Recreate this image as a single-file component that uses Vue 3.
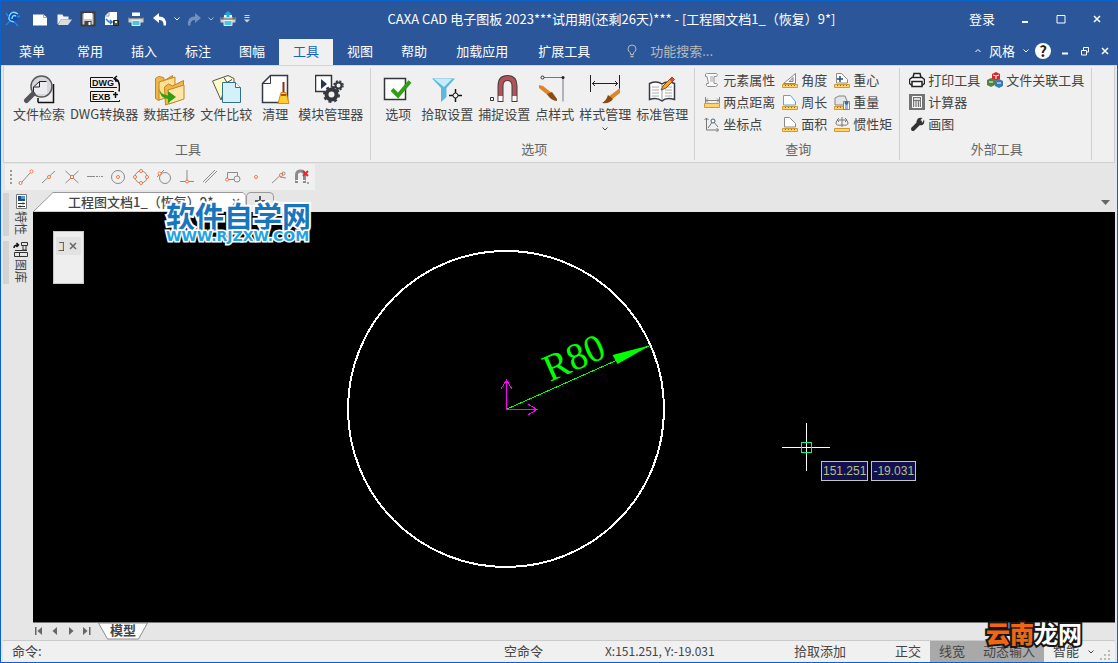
<script setup>
import { ref } from 'vue'

const search = ref('')
const command = ref('')

const quick = [
  { n: '新建', i: '<path d="M1 3.500h10.500l3.500 3v8h-14z" fill="#fff"/><path d="M11.500 3.500v3h3.500" fill="none" stroke="#9ab" />' },
  { n: '打开', i: '<path d="M1.500 13V3.500h5l1 2h5v3H5L2 13z" fill="#f4f4f4"/><path d="M5 8.500h11L12 14H2z" fill="#ddd"/>' },
  { n: '保存', i: '<path d="M1.500 1.500h13v13h-13z" fill="#ccc" stroke="#3a3a3a" stroke-width="2"/><path d="M4 2h8v6H4z" fill="#fff"/><path d="M4.500 10h7v4.500h-7z" fill="#444"/><path d="M8.500 11h2v3h-2z" fill="#fff"/>' },
  { n: '另存为', i: '<path d="M5 1h8v13H1V5z" fill="#fff"/><path d="M1 5h4V1" fill="none" stroke="#999"/><path d="M2 8l3 3h3M6 9l2 2-2 2" fill="none" stroke="#2878c8" stroke-width="1.500"/><path d="M9.500 9.500h5v5h-5z" fill="#555" stroke="#222"/><path d="M11 10h2v2h-2z" fill="#eee"/>' },
  { n: '打印', i: '<path d="M4 1.500h8V5H4z" fill="#fff"/><path d="M.5 6h15v5.500H.5z" fill="#cfcfcf"/><path d="M.5 6h15v1.500H.5z" fill="#555"/><path d="M4 9.500h8v5H4z" fill="#45c8e8" stroke="#eee"/>' },
]
const printer = '<path d="M4 4h8v3H4z" fill="#fff"/><path d="M8 0l4 3.500H9.500V6h-3V3.500H4z" fill="#18a9ea"/><path d="M.5 6h15v5.500H.5z" fill="#cfcfcf"/><path d="M.5 6h3v1.500h9V6h3v2.500H.5z" fill="#666"/><path d="M4 9.500h8v5H4z" fill="#45c8e8" stroke="#eee"/>'
const tabs = ['菜单', '常用', '插入', '标注', '图幅', '工具', '视图', '帮助', '加载应用', '扩展工具']

const toolsA = [
  { n: '文件检索', i: '<path d="M15 28.500h15.500V10" fill="none" stroke="#111" stroke-width="1.500"/><path d="M15 24v4.500" stroke="#111" stroke-width="1.500"/><circle cx="18.500" cy="12.500" r="10.500" fill="#d6d7db" stroke="#59595d" stroke-width="1.500"/><path d="M11 17v-4l5-5h8v12H13z" fill="#ececef"/><path d="M10.500 18v-5h6V7.500h7M10.500 13l6-5.500" fill="none" stroke="#222"/><path d="M10 20L3.500 26.500" stroke="#545459" stroke-width="5" stroke-linecap="round"/>' },
  { n: 'DWG转换器', i: '<path d="M25 3.500H2.500v10H29M26 17.500H2.500v10h29V26" fill="none" stroke="#111"/><text x="4" y="12" font-family="Liberation Sans, sans-serif" font-size="9" font-weight="700" fill="#111">DWG</text><text x="4" y="26" font-family="Liberation Sans, sans-serif" font-size="9" font-weight="700" fill="#111">EXB</text><path d="M27 4.500q6 3 4 13M29 2l-3 2.500 3 3M27 7h4M25 20.500h5M27.500 18v6" fill="none" stroke="#111" stroke-width="1.500"/>' },
  { n: '数据迁移', i: '<path d="M2.500 4.500l3-2 5 1 1 3 8-5 1 16-15 9-3-2z" fill="#efb649" stroke="#c48222"/><path d="M6 8l16-5v18l-16 5z" fill="#ffdf91" stroke="#c48222"/><path d="M11.500 13l4-3 4 2 11-5.500v18L12.500 31z" fill="#efb649" stroke="#c48222"/><path d="M15 16l16-5v14l-15 5z" fill="#ffe6a8" stroke="#c48222"/><path d="M6 13q0 7 9 8.500V17l8 6-8 6v-4Q6 24 6 13z" fill="#2fa012"/>' },
  { n: '文件比较', i: '<path d="M2.500 7L18 1.500l6 3v7L14 16l-3 10z" fill="#fffbc2" stroke="#555"/><path d="M14 3.500l3 5 5-3" fill="#fff" stroke="#444"/><path d="M12.500 8.500h13l5 5v15h-18z" fill="#d4f0f8" stroke="#31718d"/><path d="M25.500 8.500v5h5" fill="#fff" stroke="#31718d"/>' },
  { n: '清理', i: '<path d="M3.500 9.500l8-8h17v27h-25z" fill="#fff" stroke="#333a45" stroke-width="1.500"/><path d="M3.500 9.500h8v-8" fill="none" stroke="#333a45"/><path d="M24.500 8v11" stroke="#8d2b20" stroke-width="2"/><path d="M22 18.500h5l3 11H19z" fill="#ffce33" stroke="#dc8a14"/><path d="M22 21h5" stroke="#b64a18" stroke-width="2"/>' },
  { n: '模块管理器', i: '<path d="M.5 1.500h16v16H.5z" fill="#fff" stroke="#30353e" stroke-width="1.500"/><path d="M6 5l6 5-6 5z" fill="#28374c"/><g fill="none" stroke="#35393f"><circle cx="16.500" cy="20.500" r="7" fill="#f0f0f0" stroke="none"/><circle cx="16.500" cy="20.500" r="5" stroke-width="4"/><circle cx="16.500" cy="20.500" r="7.500" stroke-width="2" stroke-dasharray="3 2.900"/><circle cx="23.500" cy="11.500" r="3" stroke-width="2"/><circle cx="23.500" cy="11.500" r="4.500" stroke-width="1.500" stroke-dasharray="2 1.600"/></g>' },
]
const toolsB = [
  { n: '选项', i: '<path d="M2.500 4.500h21v21h-21z" fill="#fff" stroke="#30353e" stroke-width="1.500"/><path d="M10 15.500l6 6L28 7.500" fill="none" stroke="#2fa012" stroke-width="4"/>' },
  { n: '拾取设置', i: '<path d="M1 4.500h23L15.500 14v9L10 28V14z" fill="#5fb8dc"/><path d="M3 5h18l-8 8z" fill="#c5edf9"/><path d="M18 21.500h13M24.500 15v13" stroke="#111" stroke-width="1.500"/><circle cx="24.500" cy="21.500" r="2.500" fill="#f0f0f0" stroke="#111"/>' },
  { n: '捕捉设置', i: '<path d="M2.500 23.500h3v3h-3z" fill="#fff" stroke="#333"/><path d="M12.500 28V12q0-8 7-8t7 8v16" fill="none" stroke="#393f4a" stroke-width="6"/><path d="M12.500 27V12q0-8 7-8t7 8v15" fill="none" stroke="#b65252" stroke-width="4"/><path d="M10.500 22h4v5h-4zM24.500 22h4v5h-4z" fill="#fff"/>' },
  { n: '点样式', i: '<path d="M3.500 3.500h20.500v24" fill="none" stroke="#737780"/><circle cx="3.500" cy="3.500" r="1.500" fill="#fff" stroke="#222"/><circle cx="24" cy="3.500" r="1.500" fill="#222"/><path d="M0 11l4 1 10 8-3 3L0 14z" fill="#df842b"/><path d="M8 20l5-2 5 7v2q-6 0-10-7z" fill="#8b4b14"/>' },
  { n: '样式管理', i: '<path d="M1.500 1v17M30.500 1v17M3 9.500h26M6 7L3.500 9.500 6 12M26 7l2.500 2.500L26 12" fill="none" stroke="#222"/><path d="M31 14v5l-9 7-3-3z" fill="#df842b"/><path d="M19 21l5 4q-3 5-11 4 4-2 6-8z" fill="#8b4b14"/>' },
  { n: '标准管理', i: '<path d="M3.500 9.500Q11 6.500 16 10q5-3.500 12.500-.5v16Q20 23 16 27q-5-4-12.500-1.500z" fill="#fff" stroke="#353b47" stroke-width="1.500"/><path d="M16 10v16" stroke="#999"/><path d="M6 13h7M6 16h7M6 19h7M6 22h7M19 13h7M19 16h7M19 19h7M19 22h7" stroke="#aaa"/><path d="M15 16l2-4L26 3l2.500 2.500L20 14z" fill="#f4a51c" stroke="#78502b"/><path d="M24.500 4.500L27 7" stroke="#db3e3c" stroke-width="3"/>' },
]
const ruler = '<path d="M.5 12.500h15v3H.5z" fill="#ffd366" stroke="#d29a33"/><path d="M3.500 13v1M6.500 13v1M9.500 13v1M12.500 13v1" stroke="#936b24"/>'
const page = '<path d="M2.500 11V1.500h5l6 6V11z" fill="#fff" stroke="#8b8b8b"/>'
const queries = [
  { n: '元素属性', i: '<path d="M3 4.500H1.500V2q1-1 2-.5h9q2 1 0 3H10v7h2.500l1 1q-.5 2-2 2h-8q-2-1-1-3h2z" fill="#fafafa" stroke="#909090"/><path d="M6 5h3M6 7h3M6 9h3" stroke="#a3a3a3"/>' },
  { n: '角度', i: ruler + '<path d="M1.500 11.500L13.500 1.500v10z" fill="#fff" stroke="#888"/><path d="M7 9.500l4-4v4z" fill="#ddd" stroke="#888"/>' },
  { n: '重心', i: ruler + page + '<path d="M3 7h6M6 4v6" stroke="#26547d" stroke-width="1.500"/>' },
  { n: '两点距离', i: '<path d="M1.500 3v6M15.500 3v6M2 6.500h13M4 4.500L2 6.500l2 2M13 4.500l2 2-2 2" fill="none" stroke="#858585"/><path d="M.5 9.500h15v4H.5z" fill="#ffd366" stroke="#d29a33"/>' },
  { n: '周长', i: ruler + '<path d="M1.500 11V1.500h7l5 6V11z" fill="#fff" stroke="#54a5ed"/>' },
  { n: '重量', i: ruler + '<path d="M1 4l4-2h6l2 5v4H1z" fill="#e5e5e5" stroke="#858585"/><path d="M9.500 7.500h6v8h-6z" fill="#fff" stroke="#858585"/><circle cx="12.500" cy="9" r="2" fill="#336da3"/><path d="M11 12h3M11 14h3" stroke="#659"/>' },
  { n: '坐标点', i: '<path d="M2.500 2v12h12M.5 4l2-2 2 2M12.500 12l2 2-2 2M4 12l5-7 5 6" fill="none" stroke="#777"/><circle cx="9" cy="5" r="2" fill="#fff" stroke="#36627f"/>' },
  { n: '面积', i: ruler + page },
  { n: '惯性矩', i: '<path d="M.5 12.500h15v3H.5z" fill="#ffd366" stroke="#d29a33"/><path d="M8 1v10M5 4Q2 4 2 7t6 2M11 4q3 0 3 3t-6 2M5 4h6M5 2L3 4l2 2M11 2l2 2-2 2" fill="none" stroke="#777"/>' },
]
const externals = [
  { n: '打印工具', i: '<path d="M4 5.500l1-4h6l1 4M3 5.500h10l2.500 2v4l-2 1.500h-11L.5 11.500v-4z" fill="#fff" stroke="#222" stroke-width="1.500"/><path d="M3 9.500h10v5H3z" fill="#fff" stroke="#222" stroke-width="1.500"/>' },
  { n: '文件关联工具', i: '<path d="M5 2l4-2 4 2v5L9 9 5 7z" fill="#d92828"/><path d="M0 8l4-2 4 2v5l-4 2-4-2z" fill="#4b8444"/><path d="M8 9l4-2 4 2v5l-4 2-4-2z" fill="#377ab9"/><path d="M6 3l3 1 3-1M9 4v3M2 10h4M10 11h4" fill="none" stroke="#fff"/>' },
  { n: '计算器', i: '<path d="M0 0h16v16H0z" fill="#747474"/><path d="M3.500 2.500h9v11h-9z" fill="none" stroke="#fff"/><path d="M5 5h6M5 8h1.500m1 0H9m1 0h1M5 10h1.500m1 0H9m1 0h1M5 12h1.500m1 0H9m1 0h1" stroke="#fff" stroke-width="1.300"/>' },
  { n: '画图', i: '<path d="M4 13l7-7" stroke="#333" stroke-width="4" stroke-linecap="round"/><path d="M13.500 2l-3 3 1 1.500h2L15 3.500q1 4-1.500 5.500-3 1-5-1T8 4q1-3 5.500-2z" fill="#333"/>' },
]
const snaps = [
  { n: '临时追踪', i: '<path d="M4 13L12 4"/><g class="o"><circle cx="2.500" cy="14" r="1.500"/><circle cx="13.500" cy="2.500" r="1.500"/></g>' },
  { n: '中点', i: '<path d="M1 14L14 2"/><circle class="o" cx="8" cy="8" r="1.500"/>' },
  { n: '交点', i: '<path d="M1.500 2l13 12M14.500 2l-13 12"/><path class="o" d="M6.500 6.500h3v3h-3z"/>' },
  { n: '延长线', i: '<path d="M0 7.500h8M9 7.500h2M12 7.500h1M14 7.500h2"/>' },
  { n: '圆心', i: '<circle cx="8" cy="8" r="6.500"/><circle class="o" cx="8" cy="8" r="1.500"/>' },
  { n: '象限点', i: '<circle cx="8" cy="8" r="6"/><g class="o"><circle cx="8" cy="2" r="1.500"/><circle cx="8" cy="14" r="1.500"/><circle cx="2" cy="8" r="1.500"/><circle cx="14" cy="8" r="1.500"/></g>' },
  { n: '切点', i: '<circle cx="9" cy="9" r="5.500"/><path d="M1 8L8 1"/><circle class="o" cx="3.500" cy="4.500" r="1.500"/>' },
  { n: '垂足', i: '<path d="M8 1v12M1 12.500h14"/><circle class="o" cx="8" cy="12.500" r="1.500"/>' },
  { n: '平行', i: '<path d="M1 13L13 1M3 14L15 2"/>' },
  { n: '插入点', i: '<path d="M2.500 9V3.500h10V7M3 10.500h6"/><circle cx="12" cy="10" r="3"/><circle class="o" cx="2" cy="10.500" r="1.500"/>' },
  { n: '节点', i: '<circle class="o" cx="8" cy="8" r="1.500"/>' },
  { n: '最近点', i: '<path d="M1 14L12 4"/><circle cx="12.500" cy="4.500" r="1.500"/><path d="M9 8l6 1"/><circle class="o" cx="10" cy="6" r="1.500"/>' },
  { n: '捕捉设置', i: '<path d="M2.500 14V6q0-4 4-4t4 4v8" stroke-width="3"/><path d="M1.500 11.500h3M8.500 11.500h3" stroke="#fff"/><path d="M9 2l5 5M14 2L9 7" stroke="#e62b22" stroke-width="2"/><path d="M14 13v2" stroke-width="1.500"/>' },
]
const pagers = [
  { n: '首页', i: '<path d="M1 1h1.500v8H1zM8 1v8L3.500 5z"/>' },
  { n: '上一页', i: '<path d="M7 1v8L2.500 5z"/>' },
  { n: '下一页', i: '<path d="M3 1v8l4.500-4z"/>' },
  { n: '末页', i: '<path d="M1 1v8l4.500-4zM7 1h1.500v8H7z"/>' },
]
</script>

<template>
  <div class="window">
    <header>
      <div class="titlebar">
        <svg class="logo" viewBox="0 0 16 16"><path d="M3 3l-3-2 4 6-3 7 5-3 5 4-2-5 5-2-4-2 4-4-5 1-3-3z" fill="#0b4bb5" /><path d="M13 3Q7-1 4.500 4.500T9 11M11 5Q7 3.500 7 8" fill="none" stroke="#8cdaf9" stroke-width="1.500" /><path d="M1 2l3 4M1 14l4-4M9 11l4 4M12 6l3-1" stroke="#1688ef" stroke-width="1.500" /></svg>
        <div class="quick">
          <button v-for="q in quick" :key="q.n" :aria-label="q.n"><svg viewBox="0 0 16 16" v-html="q.i" /></button>
          <button aria-label="撤销"><svg viewBox="0 0 16 16"><path d="M7 2v3.500q8 0 7 9h-2.500q.5-5.500-4.500-5.500v3L1 7z" fill="#fff" /></svg></button>
          <button class="narrow" aria-label="撤销列表"><svg viewBox="0 0 8 8"><path d="M1.500 2.500L4 5l2.500-2.500" fill="none" stroke="#fff" /></svg></button>
          <button aria-label="重做"><svg viewBox="0 0 16 16"><path d="M9 2v3.500q-8 0-7 9h2.500Q4 9 9 9v3l6-5z" fill="#7190bd" /></svg></button>
          <button class="narrow" aria-label="重做列表"><svg viewBox="0 0 8 8"><path d="M1.500 2.500L4 5l2.500-2.500" fill="none" stroke="#aabbd5" /></svg></button>
          <button aria-label="批量打印"><svg viewBox="0 0 16 16" v-html="printer" /></button>
          <button class="narrow custom" aria-label="自定义"><svg viewBox="0 0 8 8"><path d="M1.500 .5h5M1.500 2.500h5" stroke="#d8d8d8" /><path d="M1 4.500h6L4 7.500z" fill="#d8d8d8" /></svg></button>
        </div>
        <h1>CAXA CAD 电子图板 2023***试用期(还剩26天)*** - [工程图文档1_（恢复）9*]</h1>
        <a class="login" href="#">登录</a>
        <div class="controls">
          <button aria-label="最小化"><svg viewBox="0 0 10 10"><path d="M2 8h6" stroke-width="2" /></svg></button>
          <button aria-label="最大化"><svg viewBox="0 0 10 10"><path d="M1 1.500h8v7.500H1z" /></svg></button>
          <button aria-label="关闭"><svg viewBox="0 0 10 10"><path d="M2 2l6 6M8 2L2 8" stroke-width="1.500" /></svg></button>
        </div>
      </div>
      <div class="tabbar">
        <nav>
          <button v-for="t in tabs" :key="t" :class="{ active: t === '工具', wide: t.length > 2 }">{{ t }}</button>
        </nav>
        <label class="search">
          <svg viewBox="0 0 10 14"><path d="M3.500 9Q1 7 1 5q0-4 4-4t4 4q0 2-2.500 4v1.500h-3z" fill="none" stroke="#b9b9b9" /><path d="M3.500 12.500h3" stroke="#b9b9b9" stroke-width="1.500" /></svg>
          <input v-model="search" placeholder="功能搜索..." aria-label="功能搜索">
        </label>
        <div class="style-tools">
          <button class="style-btn"><svg class="tiny" viewBox="0 0 8 8"><path d="M1.500 5L4 2.500 6.500 5" /></svg>风格<svg class="tiny" viewBox="0 0 8 8"><path d="M1.500 2.500L4 5l2.500-2.500" /></svg></button>
          <button class="help" aria-label="帮助">?</button>
          <button class="doc-btn" aria-label="最小化文档"><svg viewBox="0 0 10 10"><path d="M2 7.500h6" stroke-width="2" /></svg></button>
          <button class="doc-btn" aria-label="还原文档"><svg viewBox="0 0 10 10"><path d="M3.500 4V1.500h5V6H6M1.500 4.500h5V9h-5z" /></svg></button>
          <button class="doc-btn" aria-label="关闭文档"><svg viewBox="0 0 10 10"><path d="M2 2l6 6M8 2L2 8" stroke-width="1.500" /></svg></button>
        </div>
      </div>
    </header>

    <section class="ribbon">
      <div class="group tools-a">
        <div class="big-row">
          <button v-for="t in toolsA" :key="t.n" class="big"><svg viewBox="0 0 32 32" v-html="t.i" /><span>{{ t.n }}</span></button>
        </div>
        <h2>工具</h2>
      </div>
      <div class="group tools-b">
        <div class="big-row">
          <button v-for="t in toolsB" :key="t.n" class="big"><svg viewBox="0 0 32 32" v-html="t.i" /><span>{{ t.n }}</span><svg v-if="t.n === '样式管理'" class="more" viewBox="0 0 8 8"><path d="M1.500 2.500L4 5l2.500-2.500" /></svg></button>
        </div>
        <h2>选项</h2>
      </div>
      <div class="group queries">
        <div class="small-grid">
          <button v-for="q in queries" :key="q.n" class="small"><svg viewBox="0 0 16 16" v-html="q.i" />{{ q.n }}</button>
        </div>
        <h2>查询</h2>
      </div>
      <div class="group externals">
        <div class="small-grid pair">
          <button v-for="(q, k) in externals" :key="q.n" class="small" :class="{ first: k > 1 }"><svg viewBox="0 0 16 16" v-html="q.i" />{{ q.n }}</button>
        </div>
        <h2>外部工具</h2>
      </div>
    </section>

    <div class="snapbar">
      <i class="handle" />
      <button v-for="s in snaps" :key="s.n" :aria-label="s.n"><svg viewBox="0 0 16 16" v-html="s.i" /></button>
    </div>

    <div class="workspace">
      <aside>
        <button class="side">
          <svg viewBox="0 0 16 16"><path d="M3.500 1.500h10v14h-10z" fill="#fff" stroke="#777" /><path d="M5 3h7v5H5z" fill="#254b80" /><path d="M8 3h4v3H8z" fill="#4c9bd4" /><path d="M5 10.500h7M5 13.500h7M10 9.500v2M7 12.500v2" stroke="#333" /></svg>
          <span>特性</span>
        </button>
        <button class="side">
          <svg viewBox="0 0 16 16"><path d="M1 7Q1 4 5 4M3.500 2l2 2-2 2" fill="none" stroke="#111" stroke-width="1.500" /><path d="M8.500 1.500h6v3h-6zM10 5v4h3V5M1.500 11.500h13v4h-13zM6.500 11.500v4M2 9.500h12" fill="none" stroke="#333" /></svg>
          <span>图库</span>
        </button>
      </aside>
      <main>
        <div class="doc-tabs">
          <div class="doc-tab">
            <svg class="shape" viewBox="0 0 213 20" preserveAspectRatio="none"><path d="M0 20L20 .5h190l3 3V20z" fill="#fff" stroke="#999" /></svg>
            <span>工程图文档1_（恢复）9*</span>
            <button aria-label="关闭标签"><svg viewBox="0 0 8 8"><path d="M1 1l6 6M7 1L1 7" /></svg></button>
          </div>
          <button class="add" aria-label="新建标签"><svg viewBox="0 0 12 12"><path d="M6 1v10M1 6h10" /></svg></button>
          <button class="tab-list" aria-label="标签列表"><svg viewBox="0 0 10 6"><path d="M0 0h9L4.500 5z" /></svg></button>
          <div class="mark-blue"><strong>软件自学网</strong><b>WWW.RJZXW.COM</b></div>
        </div>
        <div class="canvas">
          <svg class="drawing" width="1081" height="410" viewBox="0 0 1081 410">
            <circle cx="473" cy="197" r="158" fill="none" stroke="#fff" stroke-width="2" shape-rendering="crispEdges" />
            <g fill="none" stroke="#f0f" shape-rendering="crispEdges"><path d="M473.500 197.500V167M468 177l5.500-9 5.500 9M473.500 197.500H504M495 192l9 5.500-9 5.500" /></g>
            <path d="M474 197L617 133.500" stroke="#0f0" shape-rendering="crispEdges" />
            <path d="M618 133l-38.500 10 5 9z" fill="#0f0" />
            <text class="dimension" transform="translate(517 170) rotate(-24)">R80</text>
            <g shape-rendering="crispEdges" fill="none"><path d="M749 235.500h48M773.500 211v48" stroke="#fff" /><path d="M768.500 230.500h10v10h-10z" stroke="#00ff80" /></g>
          </svg>
          <div class="coords"><output>151.251</output><output>-19.031</output></div>
          <div class="palette"><div><span>工</span><button aria-label="关闭面板"><svg viewBox="0 0 8 8"><path d="M1 1l6 6M7 1L1 7" /></svg></button></div></div>
        </div>
        <div class="model-row">
          <button v-for="p in pagers" :key="p.n" class="pager" :aria-label="p.n"><svg viewBox="0 0 10 10" v-html="p.i" /></button>
          <button class="model"><svg viewBox="0 0 50 17"><path d="M.5 0l9 16h31l9-16z" fill="#fff" stroke="#8c8c8c" /></svg><span>模型</span></button>
        </div>
      </main>
    </div>

    <footer>
      <div class="command"><label for="command">命令:</label><input id="command" v-model="command"></div>
      <span>空命令</span>
      <span class="position">X:151.251, Y:-19.031</span>
      <span>拾取添加</span>
      <div class="modes">
        <button>正交</button><button class="on">线宽</button><button class="on">动态输入</button><button class="smart">智能</button>
        <svg class="tiny" viewBox="0 0 8 8"><path d="M1.500 2.500L4 5l2.500-2.500" /></svg>
        <svg class="grip" viewBox="0 0 10 10"><path d="M8 0h2v2H8zM4 4h2v2H4zM8 4h2v2H8zM0 8h2v2H0zM4 8h2v2H4zM8 8h2v2H8z" /></svg>
      </div>
      <div class="mark-orange"><b>云南</b>龙网</div>
    </footer>
  </div>
</template>

<style>
body { margin: 0; }
</style>

<style scoped>
.window { box-sizing: border-box; min-height: 100vh; display: flex; flex-direction: column; border: 1px solid #0a63cb; background: #e6e6e6; color: #444; font: 13px/16px "Noto Sans CJK SC", sans-serif; overflow: hidden; }
button, input { font: inherit; color: inherit; background: none; border: 0; padding: 0; margin: 0; }
button { display: flex; align-items: center; justify-content: center; white-space: nowrap; }
svg { display: block; flex: none; }
h1, h2 { margin: 0; font-size: 13px; font-weight: 400; }

header { background: #2b579a; color: #fff; border-bottom: 1px solid #d4d4d4; }
.titlebar { display: flex; align-items: center; height: 36px; }
.logo { width: 16px; height: 16px; margin: 0 7px 0 4px; }
.quick { display: flex; align-items: center; }
.quick button { width: 24px; height: 24px; }
.quick .narrow { width: 10px; }
.quick .custom { width: 14px; }
.quick svg { width: 16px; height: 16px; }
.quick .narrow svg { width: 8px; height: 8px; }
h1 { flex: 1; text-align: center; white-space: nowrap; }
.login { color: #fff; text-decoration: none; margin-right: 12px; }
.controls { display: flex; padding-right: 2px; }
.controls button { width: 36px; height: 24px; }
.controls svg, .doc-btn svg { width: 10px; height: 10px; fill: none; stroke: #fff; }
.tabbar { display: flex; align-items: stretch; height: 28px; }
nav { display: flex; padding-left: 4px; }
nav button { padding: 0 14px; }
nav button:first-child { padding-right: 18px; }
nav button.wide { padding: 0 15px; }
nav button.active { background: #f0f0f0; color: #1764bd; margin-top: 2px; padding-bottom: 2px; }
.search { display: flex; align-items: center; flex: 1; gap: 13px; padding-left: 22px; }
.search svg { width: 10px; height: 14px; }
.search input { flex: 1; min-width: 60px; color: #fff; outline: 0; }
.search input::placeholder { color: #b9b9b9; opacity: 1; }
.style-tools { display: flex; align-items: center; padding-right: 2px; }
.style-btn { gap: 7px; margin-right: 5px; }
.tiny, .more { width: 8px; height: 8px; fill: none; stroke: currentColor; }
.help { width: 16px; height: 16px; border-radius: 8px; background: #fff; color: #222; font-weight: 700; font-size: 15px; margin-right: 4px; }
.doc-btn { width: 20px; height: 20px; }

.ribbon { display: flex; background: #f0f0f0; margin: 0 2px; border: solid #d0d0d0; border-width: 0 1px 1px; height: 97px; box-sizing: border-box; }
.group { display: flex; flex-direction: column; margin: 2px 0; border-right: 1px solid #d0d0d0; box-sizing: border-box; }
.tools-a { padding: 0 7px 0 9px; }
.tools-b { padding: 0 6px 0 9px; }
.queries { padding: 0 7px 0 9px; }
.externals { padding: 0 7px 0 9px; }
.big-row { display: flex; gap: 5px; padding-top: 6px; align-items: flex-start; flex: 1; }
.big { flex-direction: column; min-width: 36px; }
.big > svg:first-child { width: 32px; height: 32px; }
.big .more { margin-top: 3px; }
h2 { text-align: center; color: #666; padding-bottom: 3px; }
.small-grid { display: grid; grid-template-columns: auto auto auto; grid-auto-rows: 22px; column-gap: 7px; padding-top: 1px; flex: 1; }
.small-grid.pair { grid-template-columns: auto auto; }
.small { gap: 3px; justify-content: flex-start; }
.small.first { grid-column: 1; }
.small svg { width: 16px; height: 16px; }

.snapbar { display: flex; align-items: center; align-self: flex-start; height: 26px; margin: 1px 0 0 4px; padding: 0 2px 0 5px; background: #f0f0f0; }
.handle { width: 2px; height: 14px; margin-right: 2px; background: repeating-linear-gradient(#999 0 2px, transparent 2px 4px); }
.snapbar button { width: 23px; height: 24px; }
.snapbar svg { width: 16px; height: 16px; fill: none; stroke: #8b8b8b; }
.snapbar svg :deep(.o) { stroke: #ee7442; fill: #fff; }

.workspace { display: flex; flex: 1; margin-right: 2px; }
aside { width: 32px; display: flex; flex-direction: column; gap: 5px; padding-top: 3px; box-sizing: border-box; }
.side { flex-direction: column; justify-content: flex-start; margin-left: 2px; padding: 0 3px; height: 43px; border-left: 6px solid #d3d3d3; width: 30px; box-sizing: border-box; }
.side svg { width: 16px; height: 16px; }
.side span { writing-mode: vertical-rl; text-orientation: sideways; font-size: 12px; line-height: 14px; margin-top: 2px; }
main { flex: 1; display: flex; flex-direction: column; min-width: 0; }
.doc-tabs { position: relative; display: flex; height: 22px; align-items: flex-end; }
.doc-tab { position: relative; display: flex; align-items: center; justify-content: space-between; box-sizing: border-box; width: 213px; height: 20px; padding: 0 6px 0 35px; }
.shape { position: absolute; inset: 0; width: 100%; height: 100%; }
.doc-tab span { position: relative; font-weight: 500; white-space: nowrap; }
.doc-tab button { position: relative; }
.doc-tab button svg, .palette svg { width: 8px; height: 8px; stroke: #666; fill: none; stroke-width: 1.5; }
.add { width: 28px; height: 20px; border: 1px solid #999; border-bottom: 0; border-radius: 5px 5px 0 0; padding-bottom: 4px; box-sizing: border-box; }
.add svg { width: 12px; height: 12px; stroke: #555; stroke-width: 2; }
.tab-list { margin: 0 4px 6px auto; }
.tab-list svg { width: 10px; height: 6px; fill: #666; }
.mark-blue { position: absolute; z-index: 2; left: 133px; top: 9px; display: flex; flex-direction: column; font-family: "Noto Sans CJK SC", sans-serif; color: #1976bd; -webkit-text-stroke: 4px #fff; paint-order: stroke fill; white-space: nowrap; }
.mark-blue strong { font-size: 29px; line-height: 32px; font-weight: 700; }
.mark-blue b { font: 700 14px/11px "DejaVu Sans", sans-serif; color: #20a4e5; -webkit-text-stroke-width: 3px; }

.canvas { position: relative; flex: 1; min-height: 410px; background: #000; overflow: hidden; }
.drawing { position: absolute; left: 0; top: 0; }
.dimension { font: 38px "Liberation Serif", serif; fill: #0f0; }
.coords { position: absolute; left: 788px; top: 249px; display: flex; gap: 3px; }
.coords output { border: 1px solid #c3c3c3; background: #111150; color: #bdbd83; padding: 0 1px; font: 12px/18px "Liberation Sans", sans-serif; }
.palette { position: absolute; left: 20px; top: 19px; width: 31px; height: 53px; box-sizing: border-box; border: 1px solid #c7c7c7; padding: 5px 2px 2px; background: #eee; }
.palette div { display: flex; align-items: center; height: 18px; background: #e2e2e2; }
.palette span { width: 6px; overflow: hidden; margin: 0 5px 0 2px; font-size: 11px; }

.model-row { display: flex; align-items: flex-start; height: 17px; border-top: 1px solid #777; }
.pager { width: 16px; height: 16px; }
.pager svg { width: 10px; height: 10px; fill: #666; }
.pager:first-child { margin-left: -2px; }
.model { position: relative; width: 50px; height: 17px; font-weight: 700; align-items: flex-start; margin-left: 3px; }
.model svg { position: absolute; inset: 0; width: 50px; height: 17px; }
.model span { position: relative; line-height: 14px; }

footer { position: relative; display: grid; grid-template-columns: 492fr 101fr 189fr auto auto; align-items: center; height: 22px; margin: 0 2px; border-top: 1px solid #cacaca; background: #f0f0f0; box-sizing: border-box; padding-left: 9px; white-space: nowrap; }
footer > span, .command { padding-bottom: 2px; }
.position { font-size: 12px; }
.command { display: flex; }
.command input { flex: 1; min-width: 0; outline: 0; }
.modes { display: flex; align-items: center; align-self: stretch; padding-left: 40px; }
.modes button { padding: 0 9px 2px; align-self: stretch; }
.modes .on { background: #a9a9a9; }
.modes .smart { padding-right: 8px; }
.grip { width: 10px; height: 10px; fill: #bbb; margin: 6px 5px 0 5px; }
.mark-orange { position: absolute; right: 33px; top: -24px; display: flex; font: 700 24px/32px "Noto Sans CJK SC", sans-serif; color: #fff; -webkit-text-stroke: 4px #171717; paint-order: stroke fill; }
.mark-orange b { color: #f26611; }
</style>
